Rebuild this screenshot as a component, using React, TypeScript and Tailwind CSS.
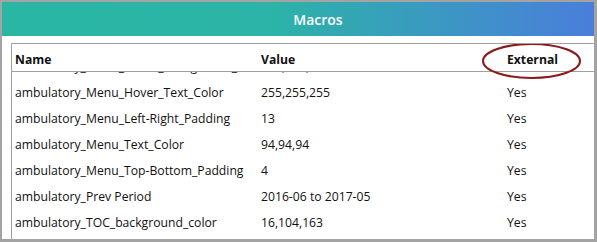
const rows = [
  { name: 'ambulatory_Menu_Hover_Background_Color', value: '255,255,255', external: 'Yes' },
  { name: 'ambulatory_Menu_Hover_Text_Color', value: '255,255,255', external: 'Yes' },
  { name: 'ambulatory_Menu_Left-Right_Padding', value: '13', external: 'Yes' },
  { name: 'ambulatory_Menu_Text_Color', value: '94,94,94', external: 'Yes' },
  { name: 'ambulatory_Menu_Top-Bottom_Padding', value: '4', external: 'Yes' },
  { name: 'ambulatory_Prev Period', value: '2016-06 to 2017-05', external: 'Yes' },
  { name: 'ambulatory_TOC_background_color', value: '16,104,163', external: 'Yes' },
];

const font = { fontFamily: '"Open Sans", "Noto Sans", sans-serif' };

export default function App() {
  return (
    <div
      className="w-[597px] h-[242px] bg-[#a3a3a3] pt-[2px] pl-[2px] pr-[3px] pb-[3px]"
      style={font}
    >
      <div className="flex flex-col h-full bg-white overflow-hidden">
        <div className="h-[34px] shrink-0 flex items-center justify-center pl-[40px] bg-[linear-gradient(to_right,#29b6a3_0%,#2bb4a7_45%,#4a7edb_100%)]">
          <span className="text-white text-[14px] font-semibold">Macros</span>
        </div>
        <div className="flex-1 pt-[7px] pl-[9px] overflow-hidden">
          <div className="relative h-full border-l border-t border-[#a0a0a0] flex flex-col overflow-hidden">
            <div className="h-[28px] shrink-0 pt-[4px] grid grid-cols-[246px_246px_1fr] items-center border-b border-[#a0a0a0] bg-white relative z-10 text-[12.2px] leading-[16px] font-bold text-[#111]">
              <div className="pl-[3px]">Name</div>
              <div className="pl-[3px]">Value</div>
              <div className="pl-[3px]">External</div>
            </div>
            <div className="flex-1 overflow-hidden">
              <div className="-mt-[18px]">
                {rows.map((r) => (
                  <div
                    key={r.name}
                    className="h-[26px] grid grid-cols-[246px_246px_1fr] items-center text-[12.2px] text-[#111] whitespace-nowrap"
                  >
                    <div className="pl-[3px]">{r.name}</div>
                    <div className="pl-[3px]">{r.value}</div>
                    <div className="pl-[3px]">{r.external}</div>
                  </div>
                ))}
              </div>
            </div>
            <svg
              className="absolute left-[469px] -top-[2px] z-20"
              width="101"
              height="38"
              viewBox="0 0 101 38"
            >
              <ellipse cx="50.5" cy="19" rx="48.5" ry="17" fill="none" stroke="#8b1a1a" strokeWidth="2" />
            </svg>
          </div>
        </div>
      </div>
    </div>
  );
}
